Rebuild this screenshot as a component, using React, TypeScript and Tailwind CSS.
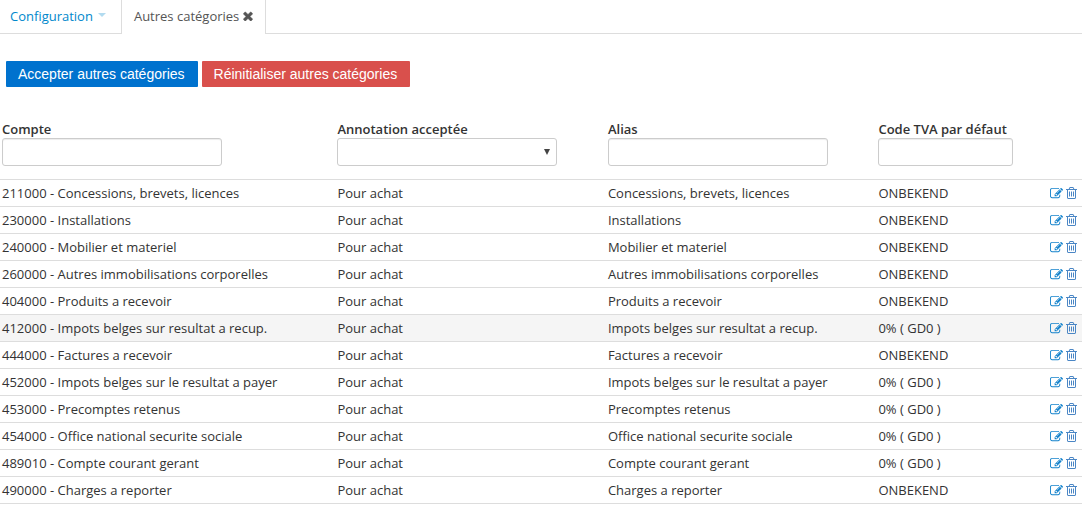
import { useState } from 'react';

type Category = { account: string; alias: string; vat: string; active?: boolean };

const categories: Category[] = [
  { account: '211000 - Concessions, brevets, licences', alias: 'Concessions, brevets, licences', vat: 'ONBEKEND' },
  { account: '230000 - Installations', alias: 'Installations', vat: 'ONBEKEND' },
  { account: '240000 - Mobilier et materiel', alias: 'Mobilier et materiel', vat: 'ONBEKEND' },
  { account: '260000 - Autres immobilisations corporelles', alias: 'Autres immobilisations corporelles', vat: 'ONBEKEND' },
  { account: '404000 - Produits a recevoir', alias: 'Produits a recevoir', vat: 'ONBEKEND' },
  { account: '412000 - Impots belges sur resultat a recup.', alias: 'Impots belges sur resultat a recup.', vat: '0% ( GD0 )', active: true },
  { account: '444000 - Factures a recevoir', alias: 'Factures a recevoir', vat: 'ONBEKEND' },
  { account: '452000 - Impots belges sur le resultat a payer', alias: 'Impots belges sur le resultat a payer', vat: '0% ( GD0 )' },
  { account: '453000 - Precomptes retenus', alias: 'Precomptes retenus', vat: '0% ( GD0 )' },
  { account: '454000 - Office national securite sociale', alias: 'Office national securite sociale', vat: '0% ( GD0 )' },
  { account: '489010 - Compte courant gerant', alias: 'Compte courant gerant', vat: '0% ( GD0 )' },
  { account: '490000 - Charges a reporter', alias: 'Charges a reporter', vat: 'ONBEKEND' },
];

function EditIcon() {
  return (
    <svg viewBox="0 0 1792 1792" className="h-[13px] w-[13px]" fill="currentColor" aria-hidden="true">
      <path d="M888 1184l116-116-152-152-116 116v56h96v96h56zm440-720q-16-16-33 1l-350 350q-17 17-1 33t33-1l350-350q17-17 1-33zm80 594v190q0 119-84.5 203.5t-203.5 84.5h-832q-119 0-203.5-84.5t-84.5-203.5v-832q0-119 84.5-203.5t203.5-84.5h832q63 0 117 25 15 7 18 23 3 17-9 29l-49 49q-14 14-32 8-23-6-45-6h-832q-66 0-113 47t-47 113v832q0 66 47 113t113 47h832q66 0 113-47t47-113v-126q0-13 9-22l64-64q15-15 35-7t20 29zm-96-738l288 288-672 672h-288v-288zm444 132l-92 92-288-288 92-92q28-28 68-28t68 28l152 152q28 28 28 68t-28 68z" />
    </svg>
  );
}

function TrashIcon() {
  return (
    <svg viewBox="192 0 1408 1792" className="h-[14px] w-[11px]" fill="currentColor" aria-hidden="true">
      <path d="M704 736v576q0 14-9 23t-23 9h-64q-14 0-23-9t-9-23v-576q0-14 9-23t23-9h64q14 0 23 9t9 23zm256 0v576q0 14-9 23t-23 9h-64q-14 0-23-9t-9-23v-576q0-14 9-23t23-9h64q14 0 23 9t9 23zm256 0v576q0 14-9 23t-23 9h-64q-14 0-23-9t-9-23v-576q0-14 9-23t23-9h64q14 0 23 9t9 23zm128 724v-948h-896v948q0 22 7 40.5t14.5 27 10.5 8.5h832q3 0 10.5-8.5t14.5-27 7-40.5zm-672-1076h448l-48-117q-7-9-17-11h-317q-10 2-17 11zm928 32v64q0 14-9 23t-23 9h-96v948q0 83-47 143.5t-113 60.5h-832q-66 0-113-58.5t-47-141.5v-952h-96q-14 0-23-9t-9-23v-64q0-14 9-23t23-9h309l70-167q15-37 54-63t79-26h320q40 0 79 26t54 63l70 167h309q14 0 23 9t9 23z" />
    </svg>
  );
}

function CloseIcon() {
  return (
    <svg viewBox="302 238 1188 1316" className="h-[10px] w-[10px]" fill="currentColor" stroke="currentColor" strokeWidth="60" aria-hidden="true">
      <path d="M1490 1322q0 40-28 68l-136 136q-28 28-68 28t-68-28l-294-294-294 294q-28 28-68 28t-68-28l-136-136q-28-28-28-68t28-68l294-294-294-294q-28-28-28-68t28-68l136-136q28-28 68-28t68 28l294 294 294-294q28-28 68-28t68 28l136 136q28 28 28 68t-28 68l-294 294 294 294q28 28 28 68z" />
    </svg>
  );
}

const field =
  'block h-7 rounded-[3px] border border-[#ccc] bg-white px-1.5 text-[13px] shadow-[inset_0_1px_1px_rgba(0,0,0,0.075)] outline-none focus:border-[#0088cc]';
const heading = 'px-0.5 pb-[13px] text-left align-top font-semibold';
const cell = 'truncate px-0.5 py-[3px]';

export default function App() {
  const [account, setAccount] = useState('');
  const [annotation, setAnnotation] = useState('');
  const [alias, setAlias] = useState('');
  const [vat, setVat] = useState('');

  return (
    <div className="bg-white font-['Open_Sans','Noto_Sans',sans-serif] text-[13px] leading-5 text-[#333]">
      <nav className="flex">
        <a href="#configuration" className="flex items-center gap-[5px] border-b border-[#ddd] pr-[15px] pb-px pl-2.5 text-[#0088cc]">
          Configuration
          <svg viewBox="0 0 8 4" className="mb-0.5 h-1 w-2" fill="#b2dbf0" aria-hidden="true">
            <path d="M0 0h8L4 4z" />
          </svg>
        </a>
        <div className="flex h-[34px] items-center gap-1 border-x border-[#ddd] px-3 pb-0.5 text-[#555]">
          <a href="#autres-categories">Autres catégories</a>
          <button type="button" aria-label="Fermer" className="cursor-pointer">
            <CloseIcon />
          </button>
        </div>
        <div className="flex-1 border-b border-[#ddd]" />
      </nav>

      <main>
        <div className="flex flex-wrap gap-1 px-1.5 pt-[27px] font-['Liberation_Sans',Arial,sans-serif] text-sm text-white">
          <button type="button" className="h-[26px] cursor-pointer rounded-[1px] bg-[#0072ce] pr-[13px] pl-3">
            Accepter autres catégories
          </button>
          <button type="button" className="h-[26px] cursor-pointer rounded-[1px] bg-[#d9504c] pr-[13px] pl-3">
            Réinitialiser autres catégories
          </button>
        </div>

        <table className="mt-8 w-full table-fixed border-collapse">
          <colgroup>
            <col className="w-[31%]" />
            <col className="w-[25%]" />
            <col className="w-[25%]" />
            <col className="w-[15.8%]" />
            <col />
          </colgroup>
          <thead>
            <tr>
              <th scope="col" className={heading}>
                <label htmlFor="account" className="block h-[19px]">Compte</label>
                <input id="account" type="text" value={account} onChange={(e) => setAccount(e.target.value)} className={`${field} w-[220px]`} />
              </th>
              <th scope="col" className={heading}>
                <label htmlFor="annotation" className="block h-[19px]">Annotation acceptée</label>
                <div className="relative w-[220px]">
                  <select
                    id="annotation"
                    value={annotation}
                    onChange={(e) => setAnnotation(e.target.value)}
                    className="block h-7 w-full appearance-none rounded-[3px] border border-[#ccc] bg-white px-1.5 text-[13px] font-normal outline-none focus:border-[#0088cc]"
                  >
                    <option value="" />
                    <option value="achat">Pour achat</option>
                  </select>
                  <svg viewBox="0 0 6 6" className="pointer-events-none absolute top-[11px] right-[7px] h-1.5 w-1.5" fill="#444" aria-hidden="true">
                    <path d="M0 0h6L3 6z" />
                  </svg>
                </div>
              </th>
              <th scope="col" className={heading}>
                <label htmlFor="alias" className="block h-[19px]">Alias</label>
                <input id="alias" type="text" value={alias} onChange={(e) => setAlias(e.target.value)} className={`${field} w-[220px]`} />
              </th>
              <th scope="col" className={heading}>
                <label htmlFor="vat" className="block h-[19px]">Code TVA par défaut</label>
                <input id="vat" type="text" value={vat} onChange={(e) => setVat(e.target.value)} className={`${field} w-[135px]`} />
              </th>
              <td />
            </tr>
          </thead>
          <tbody>
            {categories.map((row) => (
              <tr key={row.account} className={`border-y border-[#ddd] hover:bg-[#f5f5f5] ${row.active ? 'bg-[#f5f5f5]' : ''}`}>
                <td className={cell}>{row.account}</td>
                <td className={cell}>Pour achat</td>
                <td className={cell}>{row.alias}</td>
                <td className={cell}>{row.vat}</td>
                <td>
                  <div className="flex items-center justify-end gap-[3px] pr-[5px] text-[#1583cc]">
                    <button type="button" aria-label="Modifier" className="cursor-pointer">
                      <EditIcon />
                    </button>
                    <button type="button" aria-label="Supprimer" className="cursor-pointer text-[#4a86c5]">
                      <TrashIcon />
                    </button>
                  </div>
                </td>
              </tr>
            ))}
          </tbody>
        </table>
      </main>
    </div>
  );
}
